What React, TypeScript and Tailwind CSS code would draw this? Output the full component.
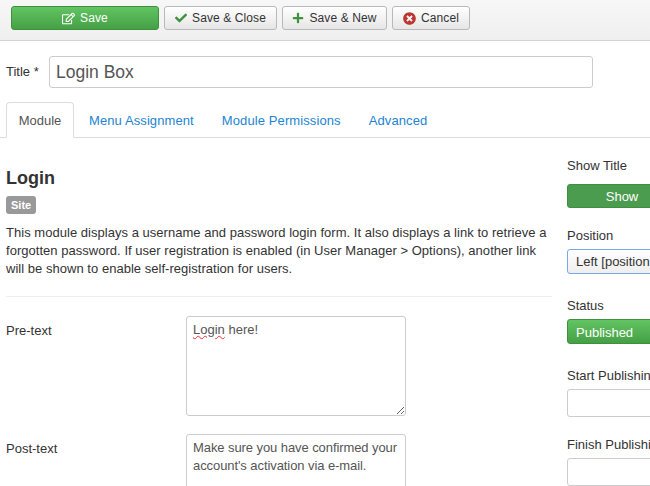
import { FaCheck, FaPlus, FaTimesCircle, FaRegEdit } from "react-icons/fa";

const tabs = ["Menu Assignment", "Module Permissions", "Advanced"];

function ToolButton({ icon, label, className }: { icon: React.ReactNode; label: string; className: string }) {
  return (
    <button className={`flex h-[24px] items-center justify-center gap-[5px] rounded-[3px] border border-[#b9b9b9] bg-gradient-to-b from-white to-[#e6e6e6] text-[12px] tracking-[0.1px] text-[#333] ${className}`}>
      {icon}
      {label}
    </button>
  );
}

function SideField({ label, className, children }: { label: string; className: string; children: React.ReactNode }) {
  return (
    <div className={`flex flex-col ${className}`}>
      <label className="h-[18px] text-[13px] leading-[18px] whitespace-nowrap">{label}</label>
      {children}
    </div>
  );
}

export default function App() {
  return (
    <div className="h-[486px] w-[650px] overflow-hidden bg-white font-['Liberation_Sans',Arial,sans-serif] text-[13px] text-[#333]">
      <div className="flex h-[41px] gap-[5px] border-b border-[#d4d4d4] bg-gradient-to-b from-[#f7f7f7] to-[#efefef] pt-[6px] pl-[11px]">
        <button className="flex h-[24px] w-[148px] items-center justify-center gap-[5px] rounded-[3px] border border-[#3f8f3f] bg-gradient-to-b from-[#62c462] to-[#45a045] text-[12px] tracking-[0.1px] text-white">
          <FaRegEdit className="text-[13px]" />
          Save
        </button>
        <ToolButton className="w-[113px]" icon={<FaCheck className="text-[12px] text-[#3f923f]" />} label="Save & Close" />
        <ToolButton className="w-[105px]" icon={<FaPlus className="text-[12px] text-[#3f923f]" />} label="Save & New" />
        <ToolButton className="w-[78px]" icon={<FaTimesCircle className="text-[13px] text-[#bd362f]" />} label="Cancel" />
      </div>

      <div className="mt-[15px] flex items-center pl-[6px]">
        <label className="w-[43px] text-[13px]">Title *</label>
        <input
          readOnly
          value="Login Box"
          className="h-[32px] w-[544px] rounded-[3px] border border-[#ccc] px-[6px] text-[17.5px] text-[#555] outline-none"
        />
      </div>

      <div className="mt-[14px] flex h-[36px] items-stretch border-b border-[#ddd] pl-[6px]">
        <div className="-mb-px mr-px flex w-[68px] items-center justify-center rounded-t-[4px] border border-[#ddd] border-b-white bg-white pt-[2px] text-[#555]">Module</div>
        {tabs.map((t) => (
          <div key={t} className="flex items-center px-[14px] pt-[2px] tracking-[0.1px] text-[#2384d3]">
            {t}
          </div>
        ))}
      </div>

      <div className="flex">
        <div className="w-[567px] shrink-0 pr-[15px] pl-[6px]">
          <h2 className="mt-[29px] text-[18px] leading-[22px] font-bold">Login</h2>
          <span className="mt-[7px] inline-block h-[18px] rounded-[3px] bg-[#999] px-[5px] text-[11px] leading-[18px] font-bold text-white">Site</span>
          <p className="mt-[9px] text-[13px] leading-[18px] tracking-[0.03px]">
            This module displays a username and password login form. It also displays a link to retrieve a forgotten password. If user registration is enabled (in User Manager &gt; Options), another link will be shown to enable self-registration for users.
          </p>
          <hr className="mt-[18px] border-[#eee]" />
          <div className="mt-[19px] flex">
            <label className="w-[180px] pt-[5px]">Pre-text</label>
            <div className="h-[100px] w-[220px] resize overflow-hidden rounded-[3px] border border-[#ccc] px-[6px] py-[4px] text-[13px] leading-[18px] text-[#555]">
              <span className="underline decoration-red-500 decoration-wavy decoration-1">Login</span> here!
            </div>
          </div>
          <div className="mt-[18px] flex">
            <label className="w-[180px] pt-[5px]">Post-text</label>
            <textarea
              readOnly
              value="Make sure you have confirmed your account's activation via e-mail."
              className="h-[100px] w-[220px] rounded-[3px] border border-[#ccc] py-[4px] pr-[2px] pl-[6px] text-[13px] leading-[18px] tracking-[-0.08px] text-[#555] outline-none"
            />
          </div>
        </div>
        <div className="flex w-[120px] shrink-0 flex-col pt-[19px]">
          <SideField label="Show Title" className="">
            <div className="mt-[9px] flex h-[24px] w-[110px] items-center justify-center rounded-[3px] border border-[#3f8f3f] bg-[#4c9c50] pt-px text-white">Show</div>
          </SideField>
          <SideField label="Position" className="mt-[19px]">
            <div className="mt-[4px] flex h-[25px] items-center rounded-[3px] border border-[#7aa7e8] bg-gradient-to-b from-white to-[#eee] pl-[8px] whitespace-nowrap">Left [position-7]</div>
          </SideField>
          <SideField label="Status" className="mt-[23px]">
            <div className="mt-[4px] flex h-[25px] items-center rounded-[3px] border border-[#3f8f3f] bg-gradient-to-b from-[#62c462] to-[#45a045] pt-[2px] pl-[8px] text-white">Published</div>
          </SideField>
          <SideField label="Start Publishing" className="mt-[23px]">
            <div className="mt-[4px] h-[28px] rounded-[3px] border border-[#ccc]" />
          </SideField>
          <SideField label="Finish Publishing" className="mt-[19px]">
            <div className="mt-[4px] h-[28px] rounded-[3px] border border-[#ccc]" />
          </SideField>
        </div>
      </div>
    </div>
  );
}
